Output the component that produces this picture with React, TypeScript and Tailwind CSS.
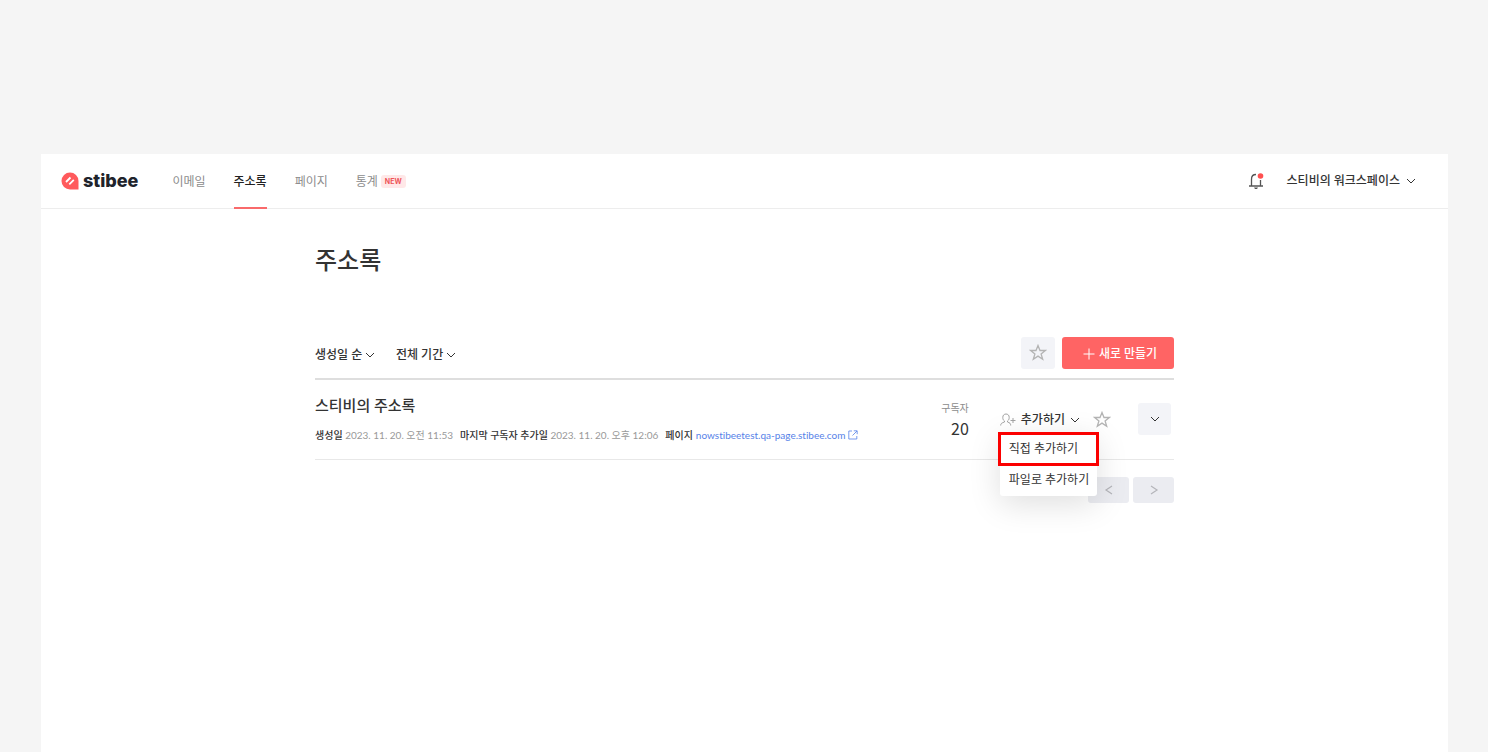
import type { ReactNode } from "react";

type IconProps = { className?: string };

function Chevron({ className = "" }: IconProps) {
  return (
    <svg viewBox="0 0 10 10" className={`h-[10px] w-[10px] shrink-0 ${className}`} fill="none" stroke="currentColor" strokeWidth="1" aria-hidden="true">
      <path d="M1 3l4 4 4-4" />
    </svg>
  );
}

function Star({ className = "" }: IconProps) {
  return (
    <svg viewBox="0 0 18 18" className={`h-[18px] w-[18px] ${className}`} fill="none" stroke="currentColor" strokeWidth="1.300" aria-hidden="true">
      <path d="M9 1.500l2 5h5.300l-4.200 3.400 1.600 5.300L9 12.100l-4.700 3.100 1.600-5.300L1.700 6.500H7z" />
    </svg>
  );
}

function Logo() {
  return (
    <a href="#home" className="flex items-center gap-1 text-[#20232b]">
      <svg viewBox="0 0 18 18" className="h-[18px] w-[18px]" aria-hidden="true">
        <path d="M9 .5a8.500 8.500 0 0 1 8.500 8.500v8.500H9A8.500 8.500 0 0 1 9 .5z" fill="#ff5a5c" />
        <path d="M5 10l4.500-4.500M8.300 12.300l4.500-4.500" stroke="#fff" strokeWidth="1.800" />
      </svg>
      <span className="font-[Inter] text-[18px] leading-6 font-extrabold">stibee</span>
    </a>
  );
}

function Bell() {
  return (
    <svg viewBox="0 0 16 18" className="h-[18px] w-4" fill="none" aria-hidden="true">
      <path d="M8 2.500C5 2.500 3.500 4.500 3.500 7.200v6.300M12.500 8v5.500M1 14h14" stroke="#555" strokeWidth="1.300" />
      <path d="M6 15.500h4l-1 1.500H7z" fill="#555" />
      <circle cx="12.500" cy="4" r="2.800" fill="#ff5050" />
    </svg>
  );
}

function PersonPlus() {
  return (
    <svg viewBox="0 0 16 16" className="h-4 w-4 text-[#a3a3a3]" fill="none" stroke="currentColor" strokeWidth="1" aria-hidden="true">
      <path d="M.7 13.500c0-2 1-2.600 3.800-3.500V9C3 8 2.800 6.700 2.800 5.300 2.800 3.300 4.200 2 6 2s3.200 1.300 3.200 3.300c0 1.400-.3 2.700-1.700 3.700v1c2.500.9 3.200 1.500 3.200 3.500M10.500 8.500h5M13 6v5" />
    </svg>
  );
}

function ExternalLink() {
  return (
    <svg viewBox="0 0 10 10" className="h-[10px] w-[10px]" fill="none" stroke="currentColor" strokeWidth="0.8" aria-hidden="true">
      <path d="M4 1H.8v8h8V6M5.800.8h3.400v3.400M9 1L4.500 5.500" />
    </svg>
  );
}

function NavItem({ label, active, children }: { label: string; active?: boolean; children?: ReactNode }) {
  return (
    <a
      href={`#${label}`}
      aria-current={active ? "page" : undefined}
      className={`-mb-px flex items-center gap-[3px] border-b-2 pt-0.5 ${active ? "border-[#f96a6b] font-medium text-[#222]" : "border-transparent text-[#8c8c8c]"}`}
    >
      {label}
      {children}
    </a>
  );
}

function Filter({ label, value }: { label: string; value: string }) {
  return (
    <label className="flex items-center gap-0.5">
      <select aria-label={label} className="h-6 appearance-none bg-transparent leading-6 font-medium outline-none">
        <option>{value}</option>
      </select>
      <Chevron />
    </label>
  );
}

function PageButton({ label, path }: { label: string; path: string }) {
  return (
    <button type="button" aria-label={label} className="flex h-[26px] w-[41px] items-center justify-center rounded-[3px] bg-[#ebecf1] text-[#b4b5ba]">
      <svg viewBox="0 0 10 10" className="h-[10px] w-[10px]" fill="none" stroke="currentColor" strokeWidth="1.200" aria-hidden="true">
        <path d={path} />
      </svg>
    </button>
  );
}

export default function App() {
  return (
    <div className="flex min-h-screen flex-col bg-[#f5f5f5] pt-[154px] pr-10 pl-[41px] font-['Lato','Noto_Sans_CJK_KR',sans-serif] text-xs text-[#333] [font-variant-ligatures:none]">
      <div className="flex-1 bg-white">
        <header className="flex h-[55px] justify-between border-b border-[#ededed] pr-8 pl-5">
          <div className="flex gap-[34px]">
            <Logo />
            <nav className="flex gap-7">
              <NavItem label="이메일" />
              <NavItem label="주소록" active />
              <NavItem label="페이지" />
              <NavItem label="통계">
                <span className="rounded-[3px] bg-[#ffe8e8] px-1 font-[Inter] text-[7px] leading-[13px] font-bold text-[#ee5559]">NEW</span>
              </NavItem>
            </nav>
          </div>
          <div className="flex items-center gap-[23px]">
            <button type="button" aria-label="알림">
              <Bell />
            </button>
            <button type="button" className="flex items-center gap-1.5 font-medium">
              스티비의 워크스페이스
              <Chevron />
            </button>
          </div>
        </header>

        <main className="mx-auto max-w-[859px]">
          <h1 className="pt-[33px] text-2xl leading-9 font-medium">주소록</h1>

          <div className="mt-[59px] flex items-end justify-between border-b-2 border-[#dedede] pb-[9px]">
            <div className="flex h-8 items-center gap-[21px] pt-[3px]">
              <Filter label="정렬" value="생성일 순" />
              <Filter label="기간" value="전체 기간" />
            </div>
            <div className="flex gap-[7px]">
              <button type="button" aria-label="즐겨찾기만 보기" className="flex h-8 w-[34px] items-center justify-center rounded-[3px] bg-[#f3f4f8] text-[#b4b4b4]">
                <Star />
              </button>
              <button type="button" className="flex h-8 w-28 items-center justify-center gap-1 rounded-[3px] bg-[#ff6464] pt-px pl-1 font-medium text-white">
                <svg viewBox="0 0 12 12" className="h-3 w-3" stroke="currentColor" strokeWidth="1" aria-hidden="true">
                  <path d="M6 .5v11M.5 6h11" />
                </svg>
                새로 만들기
              </button>
            </div>
          </div>

          <section className="flex h-20 items-center justify-between border-b border-[#e8e8e8] pr-[3px]">
            <div className="pb-1">
              <h2 className="text-[15px] leading-6 font-medium">스티비의 주소록</h2>
              <div className="mt-2.5 flex gap-[7px] text-[10px] leading-4 text-[#999]">
                <p>
                  <span className="font-medium text-[#333]">생성일</span> 2023. 11. 20. 오전 11:53
                </p>
                <p>
                  <span className="font-medium text-[#333]">마지막 구독자 추가일</span> 2023. 11. 20. 오후 12:06
                </p>
                <p className="flex items-center gap-[3px]">
                  <span className="font-medium text-[#333]">페이지</span>
                  <a href="#page" className="flex items-center gap-[3px] text-[#5682e8]">
                    nowstibeetest.qa-page.stibee.com
                    <ExternalLink />
                  </a>
                </p>
              </div>
            </div>

            <div className="flex items-center">
              <div className="mr-[31px] text-right">
                <p className="text-[10px] leading-4 text-[#8c8c8c]">구독자</p>
                <p className="font-['Noto_Sans_CJK_KR',sans-serif] text-base leading-6">20</p>
              </div>
              <div className="relative">
                <button type="button" aria-haspopup="menu" aria-expanded="true" className="flex items-center gap-[5px] font-medium">
                  <PersonPlus />
                  추가하기
                  <Chevron />
                </button>
                <div role="menu" className="absolute top-5 -left-0.5 z-10 flex w-[101px] flex-col">
                  <div className="absolute inset-x-0.5 top-0 bottom-0 -z-10 rounded-[3px] bg-white shadow-[0_8px_32px_rgba(0,0,0,0.13)]" />
                  <button type="button" role="menuitem" className="h-[34px] border-3 border-[#fb0000] pl-2 text-left">
                    직접 추가하기
                  </button>
                  <button type="button" role="menuitem" className="h-[30px] pb-0.5 pl-[11px] text-left">
                    파일로 추가하기
                  </button>
                </div>
              </div>
              <button type="button" aria-label="즐겨찾기" className="ml-[13px] text-[#b4b4b4]">
                <Star />
              </button>
              <button type="button" aria-label="더 보기" className="mb-px ml-[27px] flex h-8 w-[33px] items-center justify-center rounded-[3px] bg-[#f3f4f8]">
                <Chevron />
              </button>
            </div>
          </section>

          <nav aria-label="페이지 이동" className="flex justify-end gap-1 pt-[17px]">
            <PageButton label="이전" path="M8 1L2 5l6 4" />
            <PageButton label="다음" path="M2 1l6 4-6 4" />
          </nav>
        </main>
      </div>
    </div>
  );
}
